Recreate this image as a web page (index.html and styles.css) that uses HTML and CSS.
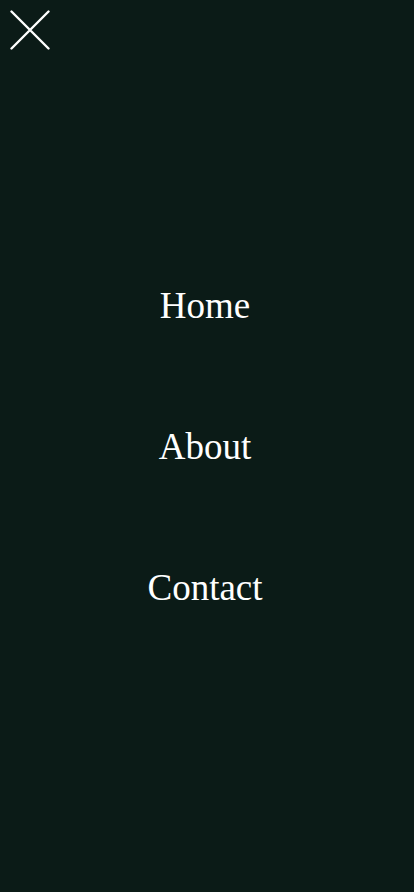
FILE: index.html
```html
<!DOCTYPE html>
<html>
<head>
<meta charset="utf-8">
<link rel="stylesheet" href="styles.css">
</head>
<body>
<div class="menu">
  <button class="close" aria-label="Close">
    <svg width="40" height="40" viewBox="0 0 40 40"><path d="M1.5 1.5 L38.5 38.5 M38.5 1.5 L1.5 38.5" stroke="#fff" stroke-width="2.4" stroke-linecap="round" fill="none"/></svg>
  </button>
  <nav class="links">
    <a href="#">Home</a>
    <a href="#">About</a>
    <a href="#">Contact</a>
  </nav>
</div>
</body>
</html>
```
FILE: styles.css
```css
html, body { margin: 0; padding: 0; }
body { background: #0b1b17; width: 414px; height: 892px; overflow: hidden; }
.menu { position: relative; height: 892px; }
.close { position: absolute; left: 10px; top: 10px; width: 40px; height: 40px; padding: 0; border: 0; background: none; display: block; }
.close svg { display: block; }
.links { display: flex; flex-direction: column; align-items: center; padding-top: 285px; padding-right: 4px; gap: 99px; }
.links a { font-family: "Liberation Serif", serif; font-size: 37px; line-height: 42px; color: #fff; text-decoration: none; }
```
